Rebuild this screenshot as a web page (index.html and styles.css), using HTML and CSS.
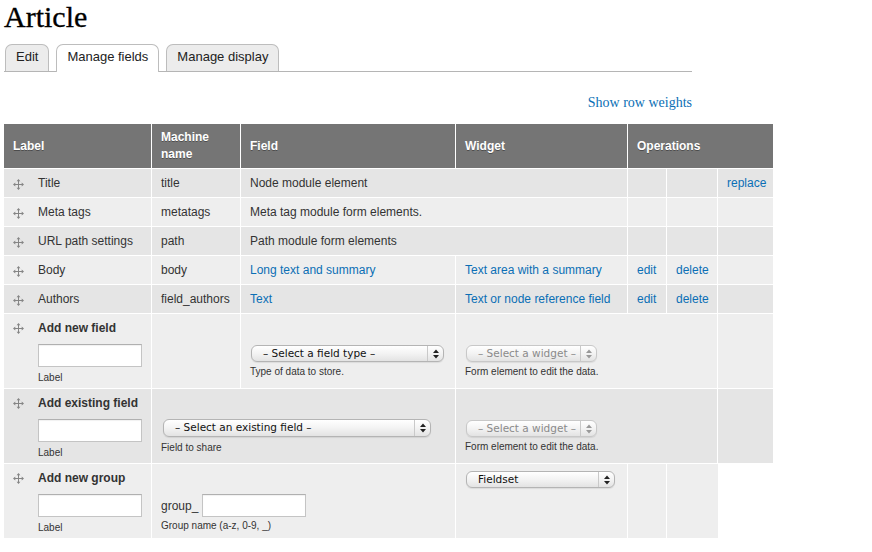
FILE: index.html
```html
<!DOCTYPE html>
<html>
<head>
<meta charset="utf-8">
<title>Article</title>
<link rel="stylesheet" href="styles.css">
</head>
<body>
<div class="page">
  <h1 class="title">Article</h1>
  <ul class="tabs">
    <li class="tab"><a>Edit</a></li>
    <li class="tab active"><a>Manage fields</a></li>
    <li class="tab"><a>Manage display</a></li>
  </ul>
  <div class="weights"><a>Show row weights</a></div>

  <table class="fields">
    <colgroup>
      <col class="c-label"><col class="c-machine"><col class="c-field"><col class="c-widget"><col class="c-op1"><col class="c-op2"><col class="c-op3">
    </colgroup>
    <thead>
      <tr><th>Label</th><th>Machine name</th><th>Field</th><th>Widget</th><th colspan="3">Operations</th></tr>
    </thead>
    <tbody>
      <tr class="odd">
        <td><span class="handle"><svg width="11" height="11" viewBox="0 0 11 11"><path d="M5.5 2v7M2 5.5h7" stroke="#858585" stroke-width="1"/><path d="M5.5 0L3.6 2.3h3.8zM5.5 11L3.6 8.7h3.8zM0 5.5L2.3 3.6v3.8zM11 5.5L8.7 3.6v3.8z" fill="#858585"/></svg></span>Title</td>
        <td>title</td>
        <td colspan="2">Node module element</td>
        <td></td><td></td><td><a class="link">replace</a></td>
      </tr>
      <tr class="even">
        <td><span class="handle"><svg width="11" height="11" viewBox="0 0 11 11"><path d="M5.5 2v7M2 5.5h7" stroke="#858585" stroke-width="1"/><path d="M5.5 0L3.6 2.3h3.8zM5.5 11L3.6 8.7h3.8zM0 5.5L2.3 3.6v3.8zM11 5.5L8.7 3.6v3.8z" fill="#858585"/></svg></span>Meta tags</td>
        <td>metatags</td>
        <td colspan="2">Meta tag module form elements.</td>
        <td></td><td></td><td></td>
      </tr>
      <tr class="odd">
        <td><span class="handle"><svg width="11" height="11" viewBox="0 0 11 11"><path d="M5.5 2v7M2 5.5h7" stroke="#858585" stroke-width="1"/><path d="M5.5 0L3.6 2.3h3.8zM5.5 11L3.6 8.7h3.8zM0 5.5L2.3 3.6v3.8zM11 5.5L8.7 3.6v3.8z" fill="#858585"/></svg></span>URL path settings</td>
        <td>path</td>
        <td colspan="2">Path module form elements</td>
        <td></td><td></td><td></td>
      </tr>
      <tr class="even">
        <td><span class="handle"><svg width="11" height="11" viewBox="0 0 11 11"><path d="M5.5 2v7M2 5.5h7" stroke="#858585" stroke-width="1"/><path d="M5.5 0L3.6 2.3h3.8zM5.5 11L3.6 8.7h3.8zM0 5.5L2.3 3.6v3.8zM11 5.5L8.7 3.6v3.8z" fill="#858585"/></svg></span>Body</td>
        <td>body</td>
        <td><a class="link">Long text and summary</a></td>
        <td><a class="link">Text area with a summary</a></td>
        <td><a class="link">edit</a></td><td><a class="link">delete</a></td><td></td>
      </tr>
      <tr class="odd">
        <td><span class="handle"><svg width="11" height="11" viewBox="0 0 11 11"><path d="M5.5 2v7M2 5.5h7" stroke="#858585" stroke-width="1"/><path d="M5.5 0L3.6 2.3h3.8zM5.5 11L3.6 8.7h3.8zM0 5.5L2.3 3.6v3.8zM11 5.5L8.7 3.6v3.8z" fill="#858585"/></svg></span>Authors</td>
        <td>field_authors</td>
        <td><a class="link">Text</a></td>
        <td><a class="link">Text or node reference field</a></td>
        <td><a class="link">edit</a></td><td><a class="link">delete</a></td><td></td>
      </tr>

      <tr class="even add">
        <td>
          <div class="add-head"><span class="handle"><svg width="11" height="11" viewBox="0 0 11 11"><path d="M5.5 2v7M2 5.5h7" stroke="#858585" stroke-width="1"/><path d="M5.5 0L3.6 2.3h3.8zM5.5 11L3.6 8.7h3.8zM0 5.5L2.3 3.6v3.8zM11 5.5L8.7 3.6v3.8z" fill="#858585"/></svg></span><strong>Add new field</strong></div>
          <div class="indent"><input class="text" type="text"><div class="desc d-label">Label</div></div>
        </td>
        <td></td>
        <td class="low">
          <div class="sel w-type"><span class="sel-text">– Select a field type –</span><span class="sel-arrow"><svg width="6" height="10" viewBox="0 0 6 10"><path d="M0 4L3 0.5L6 4zM0 6L3 9.5L6 6z" fill="#222"/></svg></span></div>
          <div class="desc d-sel">Type of data to store.</div>
        </td>
        <td class="low" colspan="3">
          <div class="sel w-widget disabled"><span class="sel-text">– Select a widget –</span><span class="sel-arrow"><svg width="6" height="10" viewBox="0 0 6 10"><path d="M0 4L3 0.5L6 4zM0 6L3 9.5L6 6z" fill="#999"/></svg></span></div>
          <div class="desc d-sel">Form element to edit the data.</div>
        </td>
        <td></td>
      </tr>

      <tr class="odd add">
        <td>
          <div class="add-head"><span class="handle"><svg width="11" height="11" viewBox="0 0 11 11"><path d="M5.5 2v7M2 5.5h7" stroke="#858585" stroke-width="1"/><path d="M5.5 0L3.6 2.3h3.8zM5.5 11L3.6 8.7h3.8zM0 5.5L2.3 3.6v3.8zM11 5.5L8.7 3.6v3.8z" fill="#858585"/></svg></span><strong>Add existing field</strong></div>
          <div class="indent"><input class="text" type="text"><div class="desc d-label">Label</div></div>
        </td>
        <td class="low" colspan="2">
          <div class="sel w-existing"><span class="sel-text">– Select an existing field –</span><span class="sel-arrow"><svg width="6" height="10" viewBox="0 0 6 10"><path d="M0 4L3 0.5L6 4zM0 6L3 9.5L6 6z" fill="#222"/></svg></span></div>
          <div class="desc d-sel d-share">Field to share</div>
        </td>
        <td class="low" colspan="3">
          <div class="sel w-widget disabled"><span class="sel-text">– Select a widget –</span><span class="sel-arrow"><svg width="6" height="10" viewBox="0 0 6 10"><path d="M0 4L3 0.5L6 4zM0 6L3 9.5L6 6z" fill="#999"/></svg></span></div>
          <div class="desc d-sel">Form element to edit the data.</div>
        </td>
        <td></td>
      </tr>

      <tr class="even add">
        <td>
          <div class="add-head"><span class="handle"><svg width="11" height="11" viewBox="0 0 11 11"><path d="M5.5 2v7M2 5.5h7" stroke="#858585" stroke-width="1"/><path d="M5.5 0L3.6 2.3h3.8zM5.5 11L3.6 8.7h3.8zM0 5.5L2.3 3.6v3.8zM11 5.5L8.7 3.6v3.8z" fill="#858585"/></svg></span><strong>Add new group</strong></div>
          <div class="indent"><input class="text" type="text"><div class="desc d-label">Label</div></div>
        </td>
        <td class="low" colspan="2">
          <div class="group-line"><span>group_</span><input class="text" type="text"></div>
          <div class="desc d-group">Group name (a-z, 0-9, _)</div>
        </td>
        <td>
          <div class="sel w-fieldset"><span class="sel-text">Fieldset</span><span class="sel-arrow"><svg width="6" height="10" viewBox="0 0 6 10"><path d="M0 4L3 0.5L6 4zM0 6L3 9.5L6 6z" fill="#222"/></svg></span></div>
        </td>
        <td></td><td></td>
      </tr>
    </tbody>
  </table>
</div>
</body>
</html>
```

FILE: styles.css
```css
html, body {
  margin: 0;
  padding: 0;
  background: #fff;
}

.page {
  padding: 0 4px;
  width: 688px;
}

.title {
  margin: 0;
  font-family: "Liberation Serif", "DejaVu Serif", serif;
  font-weight: normal;
  font-size: 30px;
  line-height: 34px;
  color: #000;
  -webkit-text-stroke: 0.3px #000;
}

.tabs {
  list-style: none;
  margin: 10px 0 0 0;
  padding: 0 0 0 1px;
  display: flex;
  border-bottom: 1px solid #b5b5b5;
  height: 27px;
}

.tab {
  margin-right: 7px;
}

.tab a {
  display: block;
  box-sizing: border-box;
  height: 27px;
  padding: 4px 10px 6px;
  font-family: "Liberation Sans", Arial, sans-serif;
  font-size: 13px;
  line-height: 16px;
  color: #222;
  background: #ececec;
  border: 1px solid #bdbdbd;
  border-bottom: none;
  border-radius: 7px 7px 0 0;
}

.tab.active a {
  background: #fff;
  height: 28px;
}

.weights {
  text-align: right;
  margin-top: 21px;
  height: 18px;
}

.weights a {
  font-family: "Liberation Serif", "DejaVu Serif", serif;
  font-size: 14px;
  line-height: 18px;
  color: #0b6fb5;
}

.fields {
  margin-top: 13px;
  width: 769px;
  table-layout: fixed;
  border-collapse: separate;
  border-spacing: 0;
  font-family: "Liberation Sans", Arial, sans-serif;
  font-size: 12px;
  color: #333;
}

.c-label { width: 148px; }
.c-machine { width: 89px; }
.c-field { width: 215px; }
.c-widget { width: 172px; }
.c-op1 { width: 39px; }
.c-op2 { width: 51px; }
.c-op3 { width: 55px; }

.fields th {
  background: #757575;
  color: #fff;
  font-weight: bold;
  text-align: left;
  vertical-align: middle;
  line-height: 17px;
  padding: 5px 9px 5px;
  border-right: 1px solid #fff;
  border-bottom: 1px solid #fff;
  text-shadow: 0 1px 0 rgba(0, 0, 0, 0.35);
}

.fields td {
  vertical-align: top;
  padding: 6px 8px 6px 9px;
  line-height: 16px;
  border-right: 1px solid #fff;
  border-bottom: 1px solid #fff;
  white-space: nowrap;
}

.fields tr.add td {
  padding-bottom: 3px;
}

.fields tr.odd td { background: #e5e5e5; }
.fields tr.even td { background: #eeeeee; }

.fields th:last-child,
.fields td:last-child { border-right: none; }

.link {
  color: #0b6fb5;
}

.handle {
  display: inline-block;
  width: 11px;
  height: 11px;
  margin-right: 14px;
  vertical-align: -3px;
}

.handle svg {
  display: block;
}

.add-head {
  height: 16px;
}

.add-head strong {
  font-weight: bold;
  color: #333;
}

.add-head .handle {
  vertical-align: -2px;
}

.indent {
  padding-left: 25px;
  margin-top: 8px;
}

input.text {
  display: block;
  box-sizing: border-box;
  width: 104px;
  height: 23px;
  margin: 0;
  padding: 2px 4px;
  border: 1px solid #c4c4c4;
  border-top-color: #b0b0b0;
  background: #fff;
  box-shadow: inset 0 1px 1px rgba(0, 0, 0, 0.06);
}

.desc {
  font-size: 10px;
  line-height: 14px;
  color: #333;
}

.d-label {
  margin-top: 4px;
}

.fields td.low {
  padding-top: 30px;
}

.d-sel {
  margin-top: 3px;
}

.d-share {
  margin-top: 4px;
}

.d-group {
  margin-top: 2px;
}

.sel {
  display: flex;
  box-sizing: border-box;
  height: 17px;
  border: 1px solid #b4b4b4;
  border-radius: 6px;
  background: linear-gradient(#ffffff, #f3f3f3 50%, #e3e3e3);
  box-shadow: 0 1px 1px rgba(0, 0, 0, 0.08);
  font-family: "DejaVu Sans", Verdana, sans-serif;
  font-size: 10.5px;
  line-height: 15px;
  color: #111;
  margin-top: 1px;
  margin-left: 1px;
}

.sel-text {
  flex: 1;
  padding-left: 11px;
  overflow: hidden;
}

.sel-arrow {
  width: 15px;
  border-left: 1px solid #c9c9c9;
  display: flex;
  align-items: center;
  justify-content: center;
}

.sel-arrow svg {
  display: block;
}

.sel.disabled {
  color: #8a8a8a;
  border-color: #c8c8c8;
}

.w-type { width: 193px; }
.w-widget { width: 131px; }
.w-existing { width: 268px; margin-left: 2px; height: 18px; margin-top: 0; }
.w-fieldset { width: 149px; }

.group-line {
  display: flex;
  align-items: center;
  height: 23px;
}

.group-line span {
  margin-right: 4px;
}
```
